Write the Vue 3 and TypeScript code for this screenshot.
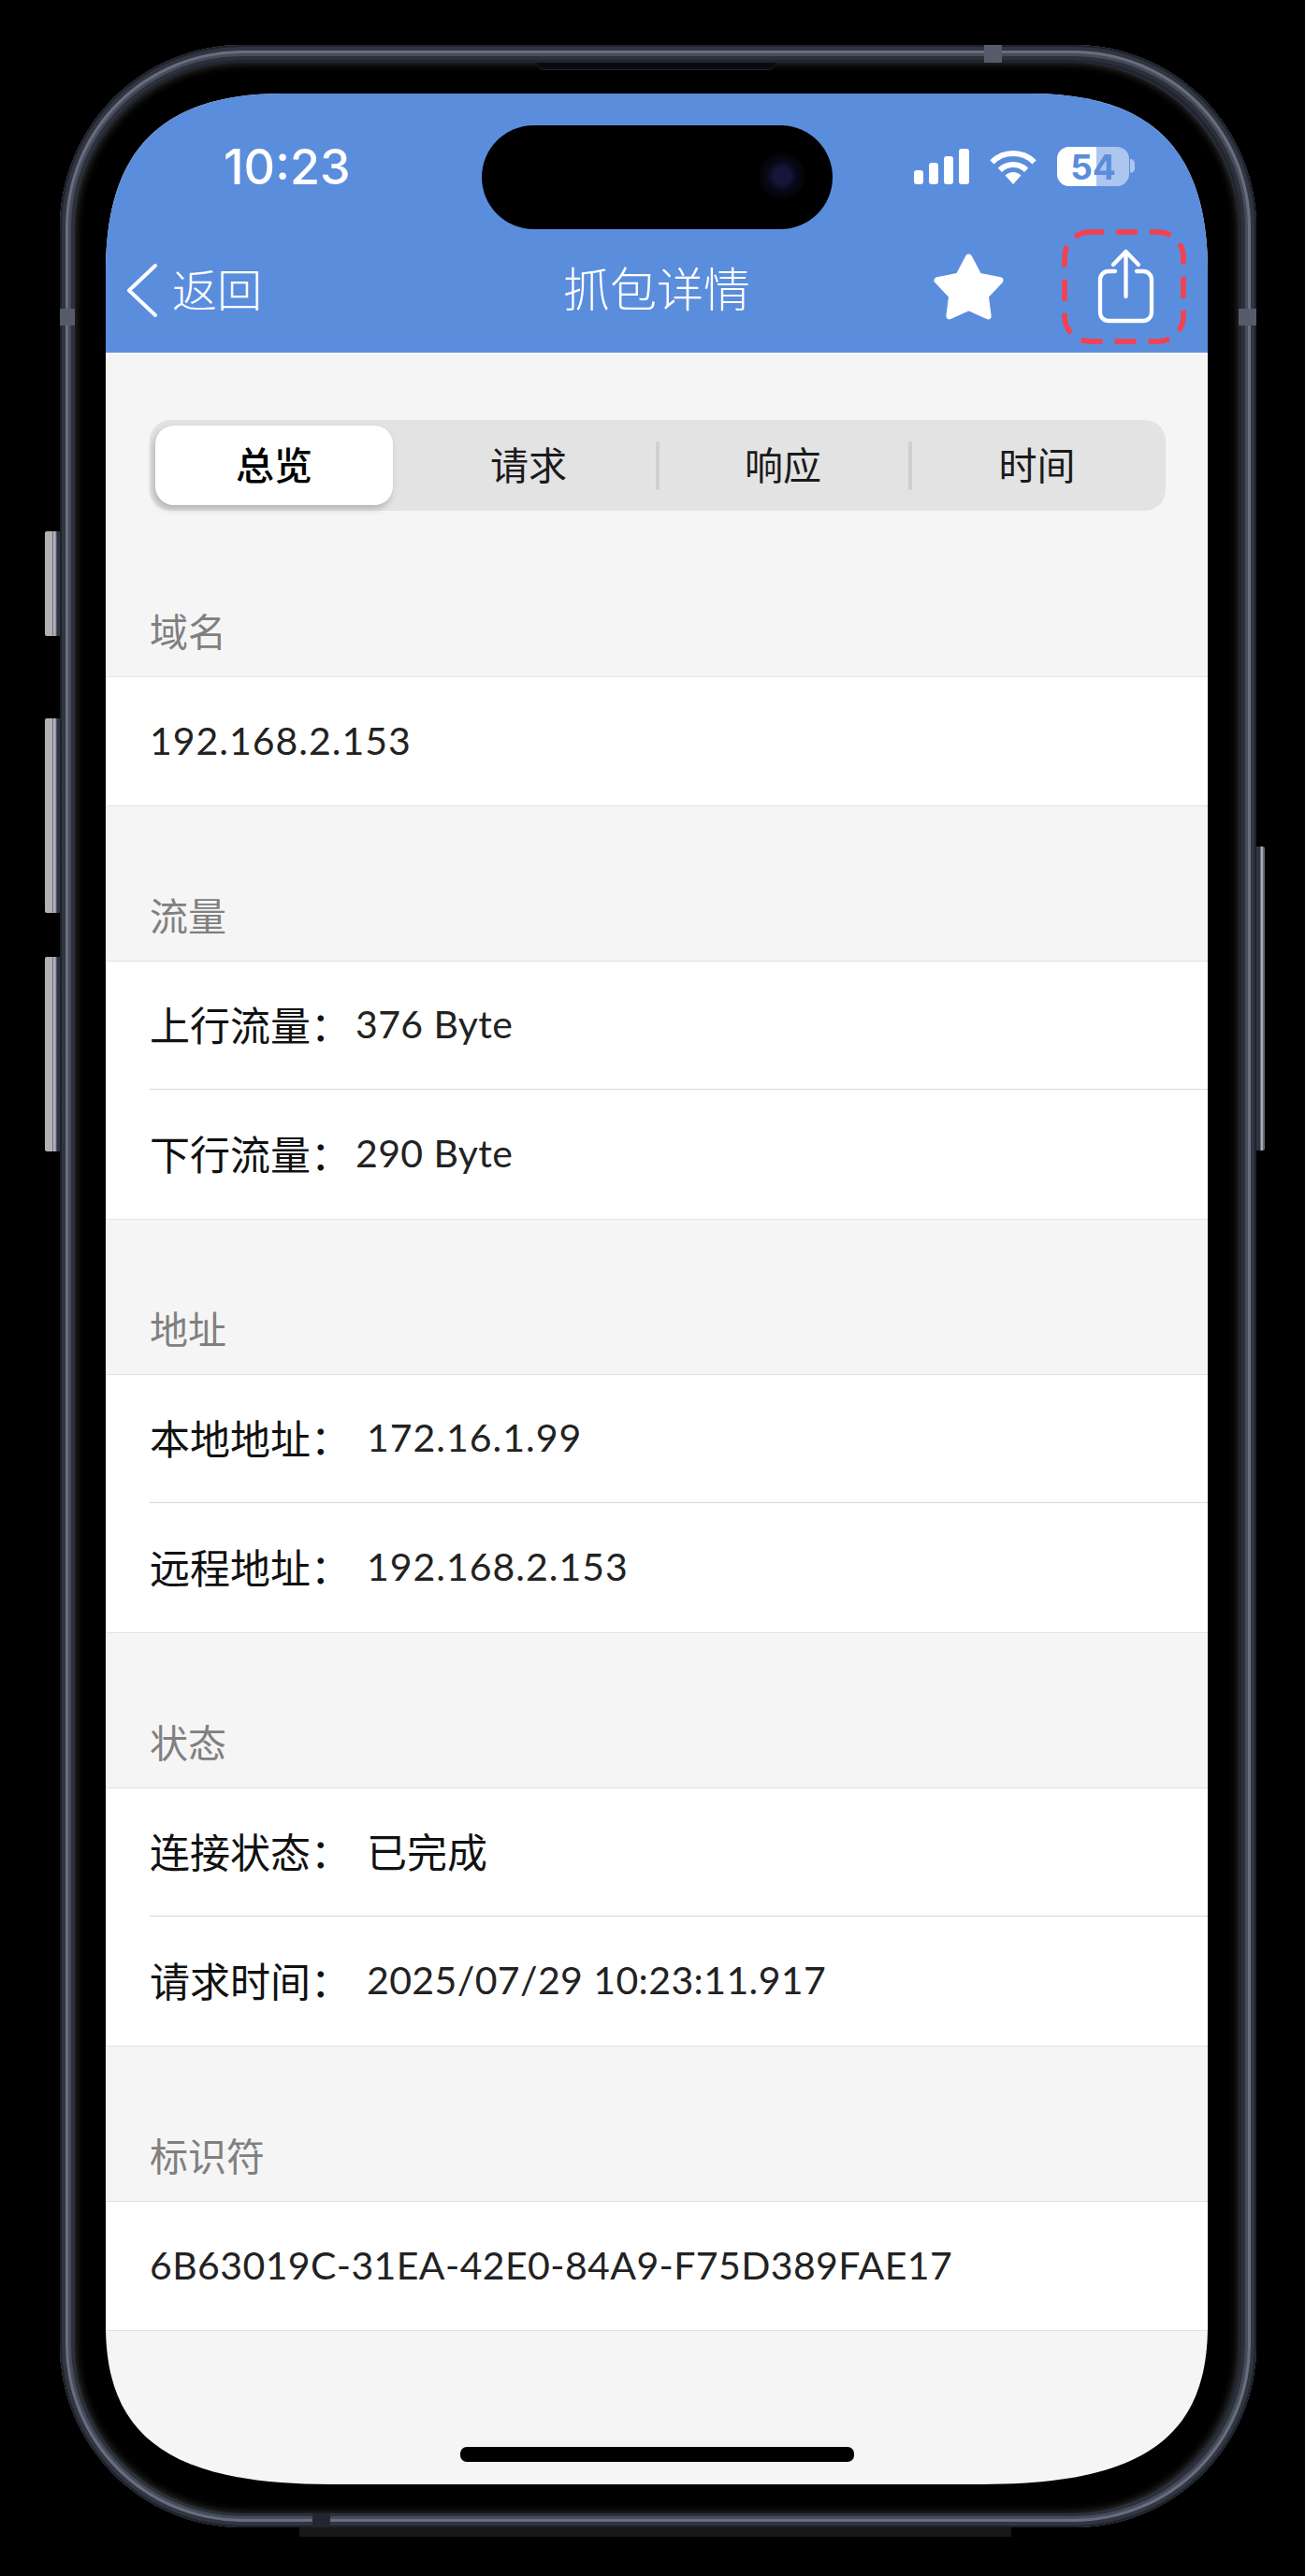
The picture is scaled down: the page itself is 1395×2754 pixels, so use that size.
<script setup lang="ts">
interface Row { label?: string; value: string; kind?: 'cjk' | 'ip'; wide?: boolean }
interface Section { title: string; rows: Row[] }

const tabs = ['总览', '请求', '响应', '时间']
const sections: Section[] = [
  { title: '域名', rows: [{ value: '192.168.2.153', kind: 'ip' }] },
  { title: '流量', rows: [
    { label: '上行流量：', value: '376 Byte' },
    { label: '下行流量：', value: '290 Byte' },
  ] },
  { title: '地址', rows: [
    { label: '本地地址：', value: '172.16.1.99', kind: 'ip', wide: true },
    { label: '远程地址：', value: '192.168.2.153', kind: 'ip', wide: true },
  ] },
  { title: '状态', rows: [
    { label: '连接状态：', value: '已完成', kind: 'cjk', wide: true },
    { label: '请求时间：', value: '2025/07/29 10:23:11.917', wide: true },
  ] },
  { title: '标识符', rows: [{ value: '6B63019C-31EA-42E0-84A9-F75D389FAE17' }] },
]
</script>

<template>
  <div class="page">
    <div class="phone">
      <span class="btn btn-l btn-1"></span>
      <span class="btn btn-l btn-2"></span>
      <span class="btn btn-l btn-3"></span>
      <span class="btn-r"></span>
      <span class="band band-top"></span>
      <span class="band band-bottom"></span>
      <span class="band band-left"></span>
      <span class="band band-right"></span>
      <span class="chin"></span>
      <div class="bezel">
        <span class="speaker"></span>
        <div class="screen">
          <header class="header">
            <div class="status">
              <span class="time">10:23</span>
              <div class="status-icons">
                <svg class="signal" width="59" height="38" viewBox="0 0 59 38" fill="#fff">
                  <rect x="0" y="23" width="10" height="15" rx="3" />
                  <rect x="16" y="15" width="10" height="23" rx="3" />
                  <rect x="32" y="8" width="10" height="30" rx="3" />
                  <rect x="48" y="0" width="11" height="38" rx="3" />
                </svg>
                <svg class="wifi" width="50" height="38" viewBox="0 0 50 38" fill="none" stroke="#fff" stroke-width="6">
                  <path d="M2.4 14.4 A32 32 0 0 1 47.6 14.4" />
                  <path d="M10.9 22.9 A20 20 0 0 1 39.1 22.9" />
                  <path d="M25 38 L16.5 28.5 A12 12 0 0 1 33.5 28.5 Z" fill="#fff" stroke="none" />
                </svg>
                <div class="battery">
                  <span class="battery-fill"></span>
                  <span class="battery-text">54</span>
                  <span class="battery-nub"></span>
                </div>
              </div>
            </div>
            <nav class="nav">
              <div class="nav-back">
                <svg width="33" height="57" viewBox="0 0 33 57" fill="none" stroke="#fff" stroke-width="4" stroke-linecap="round" stroke-linejoin="round">
                  <path d="M31 2 L3 28.5 L31 55" />
                </svg>
                <span class="nav-back-text">返回</span>
              </div>
              <div class="nav-title">抓包详情</div>
              <div class="nav-actions">
                <svg class="star" width="77" height="73" viewBox="0 0 75 71" fill="#fff" stroke="#fff" stroke-width="7" stroke-linejoin="round">
                  <path d="M37.5 5 L47.8 24.5 L70 29 L54.8 45 L57.5 66 L37.5 57 L17.5 66 L20.2 45 L5 29 L27.2 24.5 Z" />
                </svg>
                <div class="share">
                  <svg width="67" height="83" viewBox="0 0 67 83" fill="none" stroke="#fff" stroke-width="4.3" stroke-linecap="round" stroke-linejoin="round">
                    <path d="M22 25 H15 A9 9 0 0 0 6 34 V69 A9 9 0 0 0 15 78 H52 A9 9 0 0 0 61 69 V34 A9 9 0 0 0 52 25 H45" />
                    <path d="M33.5 52 V4" />
                    <path d="M20 18 L33.5 4 L47 18" />
                  </svg>
                  <svg class="callout" width="135" height="125" viewBox="0 0 135 125" fill="none">
                    <rect x="4" y="4" width="127" height="117" rx="27" stroke="#f5404f" stroke-width="5.5" stroke-dasharray="23 13" stroke-dashoffset="8" />
                  </svg>
                </div>
              </div>
            </nav>
          </header>

          <main class="content">
            <div class="seg">
              <div v-for="(t, i) in tabs" :key="t" class="seg-item" :class="{ active: i === 0, sep: i >= 2 }">{{ t }}</div>
            </div>
            <section v-for="s in sections" :key="s.title" class="section">
              <div class="section-head">{{ s.title }}</div>
              <div class="rows">
                <div v-for="r in s.rows" :key="r.value" class="row">
                  <span v-if="r.label" class="row-label" :class="{ wide: r.wide }">{{ r.label }}</span>
                  <span :class="r.kind === 'cjk' ? 'row-cjk' : r.kind === 'ip' ? 'row-value ip' : 'row-value'">{{ r.value }}</span>
                </div>
              </div>
            </section>
          </main>
          <span class="home"></span>
        </div>
        <div class="island"><span class="camera"></span></div>
      </div>
    </div>
  </div>
</template>

<style>
html, body { margin: 0; background: #000; }
</style>

<style scoped>
.page {
  width: 1395px;
  height: 2754px;
  background: #000;
  padding: 48px 0 0 64px;
  box-sizing: border-box;
  overflow: hidden;
  font-family: "Noto Sans CJK SC", "Noto Sans", sans-serif;
}
.phone {
  position: relative;
  width: 1279px;
  height: 2654px;
  box-sizing: border-box;
  padding: 19px 19px 15px 16px;
  border-radius: 195px;
  background: #2c3140;
  box-shadow:
    inset 0 0 0 2px #1d212b,
    inset 0 0 0 6px #30353f,
    inset 0 0 0 9px #696e7e,
    inset 0 0 0 12px #474c5a,
    inset 0 0 0 16px #2b303b,
    inset 0 0 0 19px #22252e;
}
.bezel {
  position: relative;
  height: 100%;
  box-sizing: border-box;
  padding: 33px 33px 31px 33px;
  border-radius: 180px;
  background: #000;
  box-shadow: inset 0 0 10px rgba(80, 80, 78, 0.75);
}
.speaker {
  position: absolute;
  left: 494px;
  top: 0;
  width: 255px;
  height: 8px;
  background: #0a0b0e;
  border-bottom: 1px solid #23262c;
  border-radius: 0 0 8px 8px;
  box-sizing: border-box;
}
.btn {
  position: absolute;
  left: -16px;
  width: 16px;
  background: linear-gradient(90deg, #b2b2b2 0 8px, #6d7280 8px 9px, #aeb2bd 9px 11px, #2f3444 13px);
  border-radius: 2px 0 0 2px;
}
.btn-1 { top: 520px; height: 112px; }
.btn-2 { top: 720px; height: 208px; }
.btn-3 { top: 975px; height: 208px; }
.btn-r {
  position: absolute;
  right: -9px;
  top: 857px;
  width: 9px;
  height: 325px;
  background: linear-gradient(90deg, #2f3444 0 4px, #a9abb3 5px 7px, #66686f 7px);
  border-radius: 0 2px 2px 0;
}
.band { position: absolute; background: #555b6b; }
.band-top { left: 988px; top: 0; width: 19px; height: 19px; }
.band-bottom { left: 270px; bottom: 0; width: 19px; height: 15px; background: #23262e; }
.band-left { left: 0; top: 282px; width: 16px; height: 18px; }
.band-right { right: 0; top: 282px; width: 19px; height: 18px; }
.chin {
  position: absolute;
  left: 256px;
  bottom: -10px;
  width: 761px;
  height: 10px;
  background: #17181a;
}
.screen {
  position: relative;
  height: 100%;
  background: #f5f5f5;
  overflow: hidden;
  clip-path: path("M0 190 C0 60 60 0 190 0 H988 C1118 0 1178 60 1178 190 V2386 C1178 2506 1108 2556 938 2556 H240 C70 2556 0 2506 0 2386 Z");
}
.header {
  height: 277px;
  background: #5b8ddd;
  color: #fff;
}
.status {
  height: 156px;
  display: flex;
  align-items: center;
  padding: 0 78px 0 126px;
  box-sizing: border-box;
}
.time {
  font-family: Inter, Roboto, sans-serif;
  font-size: 52px;
  font-weight: 500;
  line-height: 1;
  margin-top: 2px;
}
.status-icons {
  margin-left: auto;
  display: flex;
  align-items: center;
  gap: 22px;
}
.battery {
  position: relative;
  width: 77px;
  height: 42px;
  margin-right: 6px;
  border-radius: 13px;
  background: rgba(255, 255, 255, 0.5);
  display: flex;
  align-items: center;
  justify-content: center;
}
.battery-fill {
  position: absolute;
  left: 0;
  top: 0;
  bottom: 0;
  width: 42px;
  background: #fff;
  border-radius: 13px 0 0 13px;
}
.battery-text {
  position: relative;
  font-family: Inter, Roboto, sans-serif;
  font-size: 37px;
  font-weight: 700;
  line-height: 1;
  color: #5b8ddd;
}
.battery-nub {
  position: absolute;
  right: -6px;
  top: 13px;
  width: 5px;
  height: 15px;
  border-radius: 0 8px 8px 0;
  background: rgba(255, 255, 255, 0.5);
}
.nav {
  height: 108px;
  display: grid;
  grid-template-columns: 1fr auto 1fr;
  align-items: center;
}
.nav-back {
  display: flex;
  align-items: center;
  gap: 16px;
  padding-left: 22px;
  font-size: 48px;
  font-weight: 300;
  line-height: 1;
}
.nav-back-text { margin-top: -6px; }
.nav-title {
  font-size: 50px;
  font-weight: 300;
  line-height: 1;
  margin-top: -8px;
}
.nav-actions {
  display: flex;
  align-items: center;
  justify-content: flex-end;
  gap: 96px;
  padding-right: 54px;
}
.star { margin-bottom: 7px; display: block; }
.share { position: relative; margin-bottom: 8px; height: 83px; }
.share > svg:first-child { display: block; }
.callout { position: absolute; left: -36px; top: -21px; }
.content { color: #1b1b1b; }
.seg {
  margin: 72px 45px 11px 47px;
  height: 97px;
  display: grid;
  grid-template-columns: 262px 274px 270px 268px;
  background: #e3e3e3;
  border-radius: 22px;
  box-sizing: border-box;
  padding: 6px;
  font-size: 41px;
  line-height: 1;
}
.seg-item {
  position: relative;
  display: flex;
  align-items: center;
  justify-content: center;
  padding-bottom: 5px;
}
.seg-item:last-child { padding-left: 5px; }
.seg-item.active {
  background: #fff;
  border-radius: 20px;
  width: 254px;
  font-weight: 500;
  color: #000;
  box-shadow: -2px 4px 7px rgba(120, 120, 120, 0.45);
}
.seg-item.sep::before {
  content: "";
  position: absolute;
  left: -1px;
  top: 17px;
  height: 52px;
  width: 4px;
  background: #d0d0d0;
}
.section-head {
  height: 166px;
  box-sizing: border-box;
  padding: 0 0 30px 47px;
  display: flex;
  align-items: flex-end;
  font-size: 41px;
  line-height: 40px;
  color: #808080;
  border-bottom: 1px solid #e2e2e2;
}
.section:first-of-type .section-head { height: 167px; }
.rows {
  background: #fff;
  border-bottom: 1px solid #e2e2e2;
}
.row {
  margin-left: 47px;
  height: 136px;
  padding-bottom: 3px;
  box-sizing: border-box;
  display: flex;
  align-items: center;
  font-size: 43px;
  line-height: 1;
}
.rows .row:only-child { height: 137px; }
.row + .row {
  height: 139px;
  border-top: 1px solid #d8d8d8;
}
.row-label { color: #111; margin-right: 5px; }
.row-label.wide { margin-right: 17px; }
.row-value {
  font-family: Lato, "Noto Sans", sans-serif;
  font-size: 41px;
  letter-spacing: 0.4px;
  color: #222;
}
.row-value.ip { letter-spacing: 1px; }
.row-cjk { font-size: 43px; color: #111; }
.home {
  position: absolute;
  left: 379px;
  bottom: 24px;
  width: 421px;
  height: 16px;
  border-radius: 7px;
  background: #000;
}
.island {
  position: absolute;
  left: 435px;
  top: 67px;
  width: 375px;
  height: 111px;
  border-radius: 56px;
  background: #000;
}
.camera {
  position: absolute;
  left: 296px;
  top: 29px;
  width: 50px;
  height: 50px;
  border-radius: 50%;
  background: radial-gradient(circle, #15163a 0 9px, #09091a 15px, #030305 25px);
}
</style>
